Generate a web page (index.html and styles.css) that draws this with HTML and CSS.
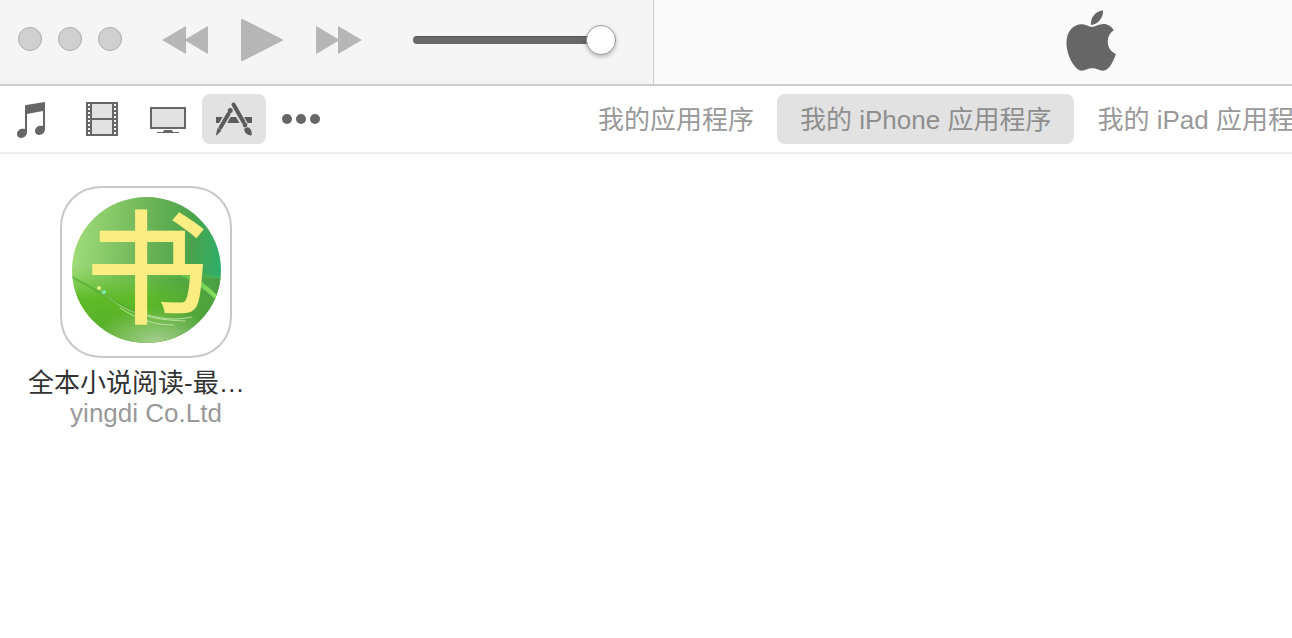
FILE: index.html
```html
<!DOCTYPE html>
<html lang="zh-CN">
<head>
  <meta charset="UTF-8">
  <title>我的 iPhone 应用程序</title>
  <link rel="stylesheet" href="styles.css">
</head>
<body>

  <header class="toolbar">
    <div class="controls">
      <div class="window-buttons">
        <button class="dot" aria-label="关闭"></button>
        <button class="dot" aria-label="最小化"></button>
        <button class="dot" aria-label="缩放"></button>
      </div>
      <div class="playback">
        <button aria-label="上一首">
          <svg width="48" height="30" viewBox="0 0 48 30"><path d="M1 15L24 1.500Q25 1 25 2V14L46 1.500Q47 1 47 2V28Q47 29 46 28.500L25 16V28Q25 29 24 28.500Z"/></svg>
        </button>
        <button aria-label="播放">
          <svg width="42" height="44" viewBox="0 0 42 44"><path d="M0 2Q0 .5 1.500 1L41 21Q43 22 41 23L1.500 43Q0 43.500 0 42Z"/></svg>
        </button>
        <button aria-label="下一首">
          <svg width="48" height="30" viewBox="0 0 48 30"><path d="M1 2Q1 1 2 1.500L23 14V2Q23 1 24 1.500L47 15L24 28.500Q23 29 23 28V16L2 28.500Q1 29 1 28Z"/></svg>
        </button>
      </div>
      <input class="volume" type="range" min="0" max="100" value="100" aria-label="音量">
    </div>
    <div class="display">
      <svg width="50" height="61" viewBox="78 30 150 184">
        <path d="M153 75C150 55 166 34 189 31C191 52 175 74 153 75Z"/>
        <path d="M155 81C166 81 175 72 191 72C204 72 215 79 222 91C197 106 196 148 228 163C221 184 208 213 189 213C177 213 171 206 157 206C143 206 137 213 125 213C106 213 79 170 79 129C79 91 103 73 124 73C138 73 147 81 155 81Z"/>
      </svg>
    </div>
  </header>

  <nav class="library-nav">
    <div class="media">
      <button aria-label="音乐">
        <svg viewBox="0 0 40 40">
          <path d="M9 7Q9 6 10 6L29 3V30C29 37 19 38 19 32C19 28 23 26 27 27V12L11 15V33C11 40 1 41 1 35C1 31 5 29 9 30Z"/>
        </svg>
      </button>
      <button aria-label="影片">
        <svg viewBox="0 0 40 40">
          <path d="M4 3H36V37H4Z"/>
          <path class="pane" d="M10 5H30V19H10ZM10 21H30V35H10Z"/>
          <path class="holes" d="M7 5V36M33 5V36"/>
        </svg>
      </button>
      <button aria-label="电视节目">
        <svg viewBox="0 0 40 40">
          <path d="M2 8H38V30H2ZM16 31H24L25 33H31V34H9V33H15Z"/>
          <path class="pane" d="M4 10H36V28H4Z"/>
        </svg>
      </button>
      <button class="selected" aria-label="应用程序">
        <svg viewBox="0 0 40 40">
          <path d="M2 18H38V24H2Z"/>
          <path class="gap" d="M16.500 11L3 35M19 6L36 35"/>
          <path class="tool" d="M19.500 5.500L29.500 23M14.500 15L6.500 28.500"/>
          <circle cx="16.200" cy="11.500" r="2.500"/>
          <path d="M3.500 29L7.500 31.500L2.500 36.500L2 36Z"/>
          <circle cx="31" cy="26" r="2.400"/>
          <path d="M30 30Q32.500 27 35.500 29Q38.500 32 37.500 36.500Q31 36 30 30Z"/>
        </svg>
      </button>
      <button aria-label="更多">
        <svg viewBox="0 0 40 40">
          <circle cx="7" cy="20" r="5"/><circle cx="21" cy="20" r="5"/><circle cx="35" cy="20" r="5"/>
        </svg>
      </button>
    </div>
    <div class="tabs">
      <button>我的应用程序</button>
      <button class="selected">我的 iPhone 应用程序</button>
      <button>我的 iPad 应用程序</button>
    </div>
  </nav>

  <main class="apps">
    <article class="app">
      <svg class="app-icon" viewBox="0 0 172 172">
        <defs>
          <linearGradient id="base" x1="0" y1=".2" x2="1" y2=".3">
            <stop offset="0" stop-color="#a3df7c"/>
            <stop offset=".5" stop-color="#6db457"/>
            <stop offset=".8" stop-color="#4aa34c"/>
            <stop offset="1" stop-color="#2fae68"/>
          </linearGradient>
          <linearGradient id="grass" x1="0" y1="0" x2="0" y2="1">
            <stop offset="0" stop-color="#6cc436" stop-opacity="0"/>
            <stop offset=".4" stop-color="#5fba28"/>
            <stop offset="1" stop-color="#58ac2e"/>
          </linearGradient>
          <linearGradient id="shade" x1=".5" y1="0" x2="1" y2="0">
            <stop offset="0" stop-color="#4b9d42" stop-opacity="0"/>
            <stop offset="1" stop-color="#4b9d42"/>
          </linearGradient>
          <radialGradient id="glow">
            <stop offset="0" stop-color="#a4cf8d"/>
            <stop offset="1" stop-color="#a4cf8d" stop-opacity="0"/>
          </radialGradient>
          <linearGradient id="ray" x1="0" y1="0" x2="1" y2="0">
            <stop offset="0" stop-color="#8de35c" stop-opacity="0"/>
            <stop offset="1" stop-color="#8dea62"/>
          </linearGradient>
          <clipPath id="ball"><ellipse cx="86.500" cy="84" rx="74.500" ry="73"/></clipPath>
        </defs>
        <path fill="#fff" stroke="#c8c8c8" stroke-width="2" d="M42 1H130C154 1 171 18 171 42V130C171 154 154 171 130 171H42C18 171 1 154 1 130V42C1 18 18 1 42 1Z"/>
        <g clip-path="url(#ball)">
          <path fill="url(#base)" d="M10 10H162V160H10Z"/>
          <path fill="url(#grass)" d="M10 82C50 82 110 76 164 92V160H10Z"/>
          <path fill="url(#shade)" d="M10 92H164V160H10Z"/>
          <ellipse cx="96" cy="156" rx="62" ry="34" fill="url(#glow)"/>
          <path fill="url(#ray)" d="M96 82C122 80 144 94 164 117V121C142 100 122 86 96 82Z"/>
          <g fill="none" stroke="#d6f5bd" opacity=".7">
            <path d="M40 106C60 120 68 125 84 128C104 134 118 134 132 131"/>
            <path d="M50 112C66 126 88 134 126 135"/>
            <path d="M60 122C76 132 92 139 114 139"/>
          </g>
          <path fill="none" stroke="#489c2c" stroke-width="2" opacity=".5" d="M10 90C42 106 54 118 88 132"/>
          <circle cx="39" cy="102" r="2" fill="#e8f68c"/>
          <circle cx="44" cy="106" r="2" fill="#80e8b0"/>
        </g>
        <text class="icon-text" x="87" y="128" text-anchor="middle">书</text>
      </svg>
      <h2>全本小说阅读-最…</h2>
      <p>yingdi Co.Ltd</p>
    </article>
  </main>

</body>
</html>
```

FILE: styles.css
```css
* {
  box-sizing: border-box;
}
body {
  margin: 0;
  background: #fff;
  font-family: "Liberation Sans", "Noto Sans CJK SC", sans-serif;
  font-size: 26px;
  overflow-x: hidden;
}
button {
  border: none;
  padding: 0;
  background: none;
  font: inherit;
  color: inherit;
  cursor: pointer;
}
svg {
  display: block;
}
.toolbar {
  display: flex;
  height: 86px;
  overflow: hidden;
  border-bottom: 2px solid #cdcdcd;
  background: #fafafa;
}
.controls {
  flex: none;
  display: flex;
  align-items: center;
  padding: 0 37px 4px 18px;
  background: #f5f5f5;
  border-right: 1px solid #cdcdcd;
}
.window-buttons {
  display: flex;
  gap: 16px;
  margin-right: 39px;
  padding-bottom: 2px;
}
.dot {
  width: 24px;
  height: 24px;
  border: 1px solid #aeaeae;
  border-radius: 50%;
  background: #d0d0d0;
}
.playback {
  display: flex;
  align-items: center;
  gap: 32px;
  margin-right: 50px;
  fill: #b6b6b6;
}
.volume {
  appearance: none;
  width: 203px;
  height: 30px;
  margin: 0;
  background: none;
}
.volume::-webkit-slider-runnable-track {
  height: 8px;
  border-radius: 4px;
  background: #686868;
  border-top: 1px solid #555;
}
.volume::-webkit-slider-thumb {
  appearance: none;
  width: 30px;
  height: 30px;
  margin-top: -12px;
  border: 1px solid #9c9c9c;
  border-radius: 50%;
  background: #fff;
  box-shadow: 0 2px 4px rgba(0, 0, 0, 0.25);
}
/* the display keeps its width and is cut off in narrow windows */
.display {
  flex: 1 0 873px;
  display: flex;
  align-items: center;
  justify-content: center;
  padding-bottom: 4px;
  fill: #666;
}
.library-nav {
  display: flex;
  align-items: center;
  height: 68px;
  padding-left: 4px;
  overflow: hidden;
  border-bottom: 2px solid #ededed;
}
.media {
  flex: none;
  display: flex;
  gap: 2px;
  margin-right: 243px;
  fill: #666;
}
.media button {
  display: flex;
  align-items: center;
  justify-content: center;
  width: 64px;
  height: 50px;
  border-radius: 8px;
}
.media svg {
  width: 40px;
  height: 40px;
}
.media .pane {
  fill: #e2e2e2;
}
.media .holes {
  stroke: #fff;
  stroke-width: 2;
  stroke-dasharray: 2 2;
}
.media .gap {
  stroke: #e2e2e2;
  stroke-width: 7;
}
.media .tool {
  stroke: #5c5c5c;
  stroke-width: 4;
  stroke-linecap: round;
}
.media .selected {
  fill: #5c5c5c;
}
.tabs {
  flex: none;
  display: flex;
  white-space: nowrap;
  color: #999;
}
.tabs button {
  height: 50px;
  padding: 0 23px 4px;
  border-radius: 8px;
}
.library-nav .selected {
  background: #e2e2e2;
}
.tabs .selected {
  color: #8e8e8e;
}
.apps {
  display: flex;
  flex-wrap: wrap;
  gap: 32px;
  padding: 32px 28px;
}
.app {
  width: 236px;
}
.app-icon {
  width: 172px;
  height: 172px;
  margin: 0 auto 10px;
}
.icon-text {
  font-family: "Noto Sans CJK SC", sans-serif;
  font-size: 124px;
  font-weight: 500;
  fill: #fbed82;
}
.app h2 {
  margin: 0;
  font-size: 26px;
  font-weight: normal;
  line-height: 30px;
  white-space: nowrap;
  color: #333;
}
.app p {
  margin: 0;
  line-height: 30px;
  text-align: center;
  color: #999;
}
```
